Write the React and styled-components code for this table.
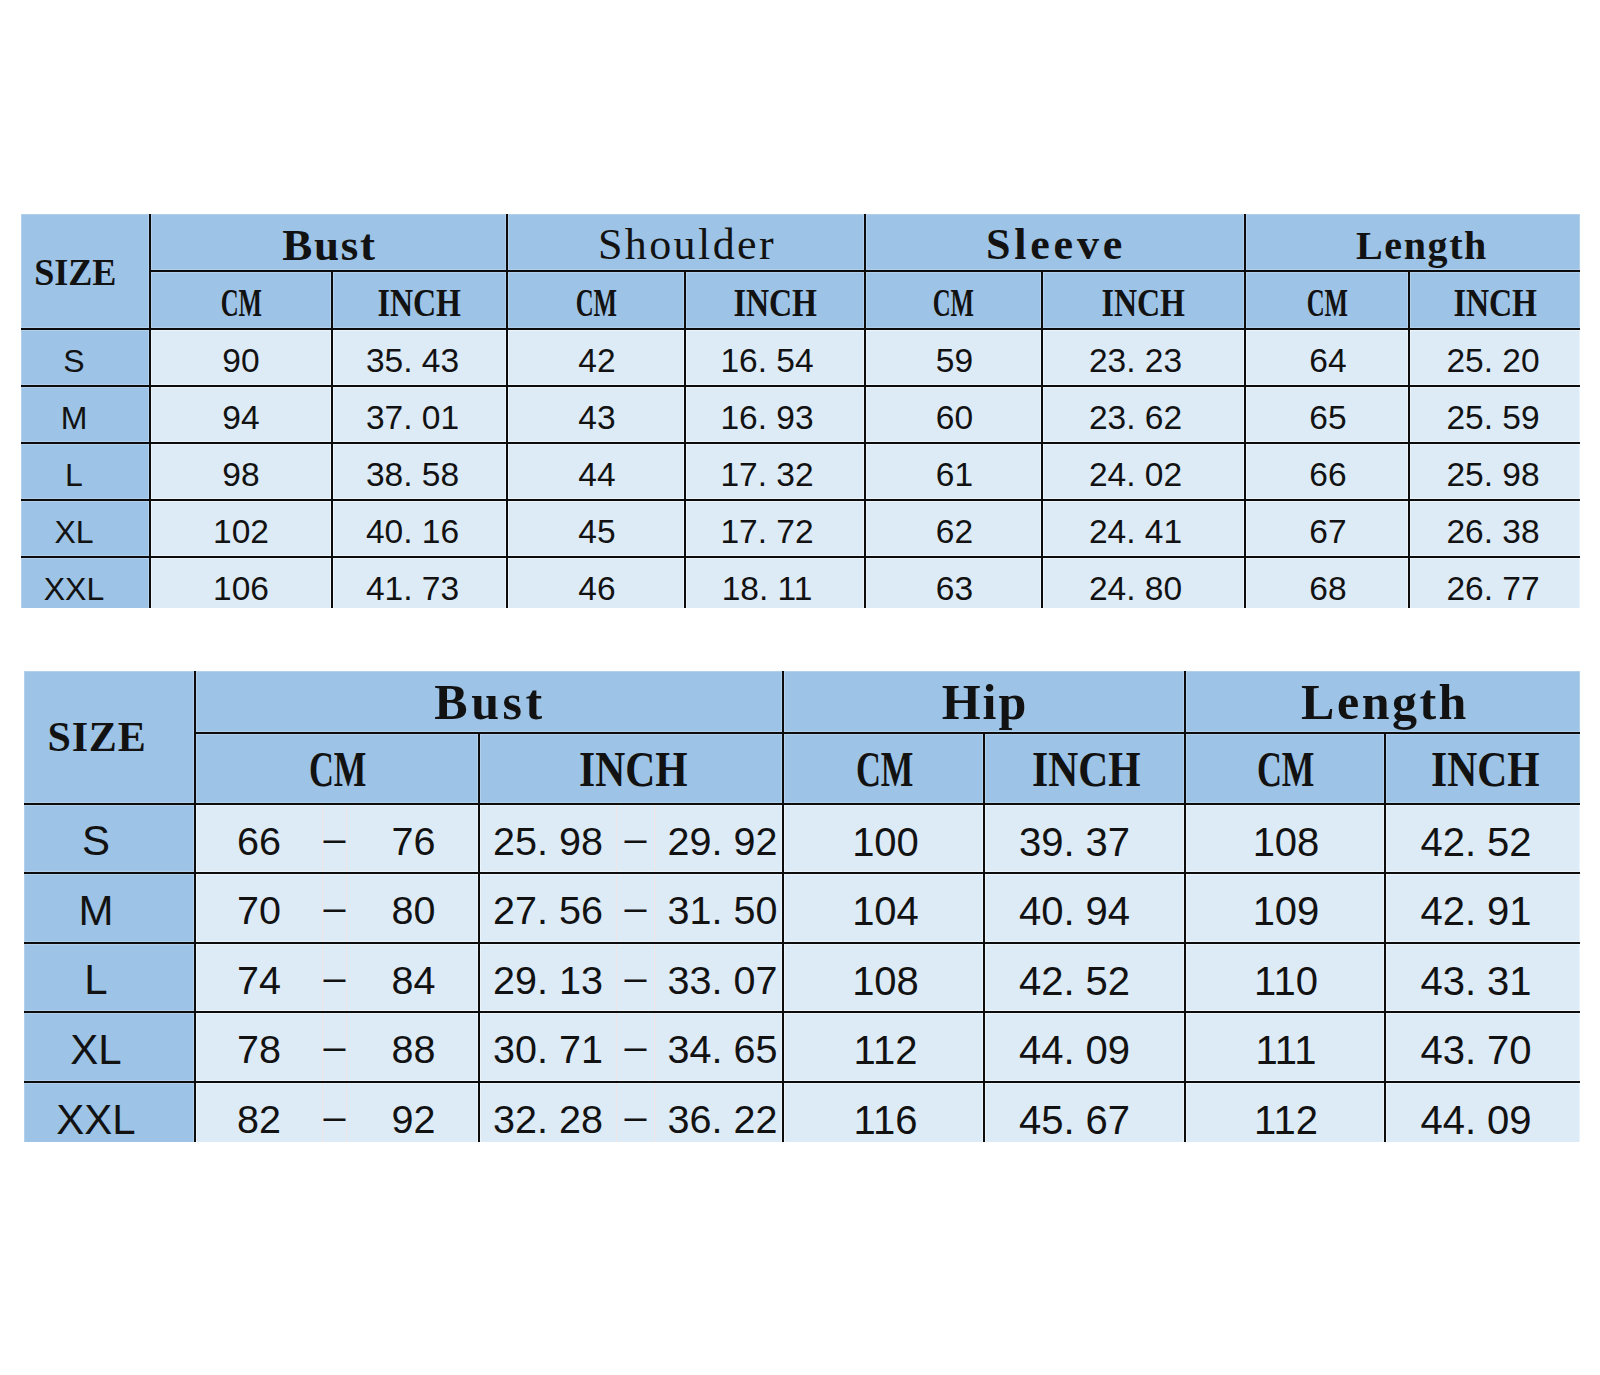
import React from "react";
import styled, { createGlobalStyle } from "styled-components";

const Global = createGlobalStyle`
  html, body { margin: 0; padding: 0; background: #ffffff; }
  body { width: 1600px; height: 1375px; overflow: hidden; }
`;

const HEAD_BLUE = "#9dc3e6";
const CELL_BLUE = "#ddebf7";
const INK = "#121212";

const pad = (top, dx) =>
  `${top}px ${dx < 0 ? -2 * dx : 0}px 0 ${dx > 0 ? 2 * dx : 0}px`;

const Page = styled.main`
  display: flex;
  flex-direction: column;
  align-items: flex-start;
  box-sizing: border-box;
  width: 1600px;
  height: 1375px;
  padding-top: 214px;
  background: #ffffff;
`;

const Table = styled.section`
  display: grid;
  grid-template-columns: ${(p) => p.$cols};
  grid-template-rows: ${(p) => p.$rows};
  gap: 2px;
  background: #0c0c0c;
  height: ${(p) => p.$height}px;
  overflow: hidden;
  margin-left: ${(p) => p.$left}px;
  margin-top: ${(p) => p.$top}px;
`;

const HeadCell = styled.div`
  grid-column: span ${(p) => p.$span || 1};
  grid-row: span ${(p) => p.$rowSpan || 1};
  display: flex;
  align-items: center;
  justify-content: center;
  box-sizing: border-box;
  padding: ${(p) => pad(p.$pt || 0, p.$dx || 0)};
  background: ${HEAD_BLUE};
  box-shadow: inset 0 0 0 1px rgba(255, 255, 255, 0.22);
  color: ${INK};
  overflow: hidden;
`;

const HeadText = styled.span`
  display: inline-block;
  font-family: "Liberation Serif", "Times New Roman", serif;
  font-size: ${(p) => p.$size}px;
  font-weight: ${(p) => p.$weight || 700};
  letter-spacing: ${(p) => p.$ls || 0}px;
  line-height: 1;
  white-space: nowrap;
  transform: scaleX(${(p) => p.$sx || 1});
`;

const SizeCell = styled.div`
  display: flex;
  align-items: center;
  justify-content: center;
  box-sizing: border-box;
  padding: ${(p) => pad(p.$shift, p.$dx || 0)};
  background: ${HEAD_BLUE};
  box-shadow: inset 0 0 0 1px rgba(255, 255, 255, 0.22);
  font-family: "Liberation Sans", Arial, sans-serif;
  font-size: ${(p) => p.$size}px;
  color: ${INK};
  line-height: 1;
`;

const ValueCell = styled.div`
  display: flex;
  align-items: center;
  justify-content: center;
  box-sizing: border-box;
  padding: ${(p) => pad(p.$shift, p.$dx || 0)};
  background: ${CELL_BLUE};
  box-shadow: inset 0 0 0 1px rgba(255, 255, 255, 0.45);
  font-family: "Liberation Sans", Arial, sans-serif;
  font-size: ${(p) => p.$size}px;
  color: ${INK};
  line-height: 1;
  white-space: pre;
`;

const RangeCell = styled.div`
  display: grid;
  grid-template-columns: ${(p) => p.$cols};
  background: ${CELL_BLUE};
  box-shadow: inset 0 0 0 1px rgba(255, 255, 255, 0.45);
`;

const RangePart = styled.div`
  display: flex;
  align-items: center;
  justify-content: center;
  box-sizing: border-box;
  padding: ${(p) => pad(p.$shift, p.$dx || 0)};
  font-family: "Liberation Sans", Arial, sans-serif;
  font-size: ${(p) => p.$size}px;
  color: ${INK};
  line-height: 1;
  white-space: pre;
`;

const Dash = styled(RangePart)`
  padding: 0;
  border-left: 1px solid #efe4e6;
  border-right: 1px solid #efe4e6;
`;

const top1 = [
  ["S", "90", "35. 43", "42", "16. 54", "59", "23. 23", "64", "25. 20"],
  ["M", "94", "37. 01", "43", "16. 93", "60", "23. 62", "65", "25. 59"],
  ["L", "98", "38. 58", "44", "17. 32", "61", "24. 02", "66", "25. 98"],
  ["XL", "102", "40. 16", "45", "17. 72", "62", "24. 41", "67", "26. 38"],
  ["XXL", "106", "41. 73", "46", "18. 11", "63", "24. 80", "68", "26. 77"],
];
const nudge1 = [0, -7, 1, -8, 1, -8, 1, -2];

const groups1 = [
  { label: "Bust", size: 45, weight: 700, ls: 1.8, dx: 1 },
  { label: "Shoulder", size: 44, weight: 400, ls: 2.4, dx: 1 },
  { label: "Sleeve", size: 44, weight: 700, ls: 3.8, dx: 1 },
  { label: "Length", size: 40, weight: 700, ls: 1.6, dx: 9 },
];

const bottom2 = [
  ["S", ["66", "76"], ["25. 98", "29. 92"], "100", "39. 37", "108", "42. 52"],
  ["M", ["70", "80"], ["27. 56", "31. 50"], "104", "40. 94", "109", "42. 91"],
  ["L", ["74", "84"], ["29. 13", "33. 07"], "108", "42. 52", "110", "43. 31"],
  ["XL", ["78", "88"], ["30. 71", "34. 65"], "112", "44. 09", "111", "43. 70"],
  ["XXL", ["82", "92"], ["32. 28", "36. 22"], "116", "45. 67", "112", "44. 09"],
];
const nudge2 = [2, -10, 1, -7];

function ChartOne() {
  return (
    <Table
      $cols="128px 180px 173px 176px 178px 175px 201px 162px 170px"
      $rows="56px 56px 55px 55px 55px 55px 55px"
      $height={394}
      $left={21}
      $top={0}
    >
      <HeadCell $rowSpan={2} $dx={-10} $pt={2}>
        <HeadText $size={38} $sx={0.95}>SIZE</HeadText>
      </HeadCell>
      {groups1.map((g) => (
        <HeadCell key={g.label} $span={2} $pt={g.label === "Length" ? 8 : 6} $dx={g.dx}>
          <HeadText $size={g.size} $weight={g.weight} $ls={g.ls}>
            {g.label}
          </HeadText>
        </HeadCell>
      ))}
      {groups1.map((g) => (
        <React.Fragment key={g.label + "u"}>
          <HeadCell $pt={6}>
            <HeadText $size={40} $sx={0.62}>CM</HeadText>
          </HeadCell>
          <HeadCell $pt={6}>
            <HeadText $size={40} $sx={0.8}>INCH</HeadText>
          </HeadCell>
        </React.Fragment>
      ))}
      {top1.map((row) => (
        <React.Fragment key={row[0]}>
          <SizeCell $size={32} $shift={6} $dx={-11}>
            {row[0]}
          </SizeCell>
          {row.slice(1).map((v, i) => (
            <ValueCell key={i} $size={33.5} $shift={6} $dx={nudge1[i]}>
              {v}
            </ValueCell>
          ))}
        </React.Fragment>
      ))}
    </Table>
  );
}

function Range({ pair, cols, size, rightDx }) {
  return (
    <RangeCell $cols={cols}>
      <RangePart $size={size} $shift={6}>{pair[0]}</RangePart>
      <Dash $size={size}>–</Dash>
      <RangePart $size={size} $shift={6} $dx={rightDx}>{pair[1]}</RangePart>
    </RangeCell>
  );
}

function ChartTwo() {
  return (
    <Table
      $cols="170px 282px 302px 199px 199px 198px 194px"
      $rows="61px 69px 67px 68px 67px 68px 68px"
      $height={471}
      $left={24}
      $top={63}
    >
      <HeadCell $rowSpan={2} $dx={-12}>
        <HeadText $size={42} $ls={0.8}>SIZE</HeadText>
      </HeadCell>
      <HeadCell $span={2} $dx={1}>
        <HeadText $size={50} $ls={3.5}>Bust</HeadText>
      </HeadCell>
      <HeadCell $span={2} $dx={1}>
        <HeadText $size={50} $ls={2}>Hip</HeadText>
      </HeadCell>
      <HeadCell $span={2} $dx={2}>
        <HeadText $size={50} $ls={2.5}>Length</HeadText>
      </HeadCell>
      {[0, 1, 2].map((k) => (
        <React.Fragment key={k}>
          <HeadCell $dx={1}>
            <HeadText $size={50} $sx={0.69}>CM</HeadText>
          </HeadCell>
          <HeadCell $dx={2}>
            <HeadText $size={50} $sx={0.83}>INCH</HeadText>
          </HeadCell>
        </React.Fragment>
      ))}
      {bottom2.map((row) => (
        <React.Fragment key={row[0]}>
          <SizeCell $size={42} $shift={5} $dx={-13}>
            {row[0]}
          </SizeCell>
          <Range pair={row[1]} cols="126px 25px 1fr" size={39.5} rightDx={1} />
          <Range pair={row[2]} cols="136px 39px 1fr" size={39.5} rightDx={4} />
          {row.slice(3).map((v, i) => (
            <ValueCell key={i} $size={40} $shift={6} $dx={nudge2[i]}>
              {v}
            </ValueCell>
          ))}
        </React.Fragment>
      ))}
    </Table>
  );
}

export default function App() {
  return (
    <>
      <Global />
      <Page>
        <ChartOne />
        <ChartTwo />
      </Page>
    </>
  );
}
